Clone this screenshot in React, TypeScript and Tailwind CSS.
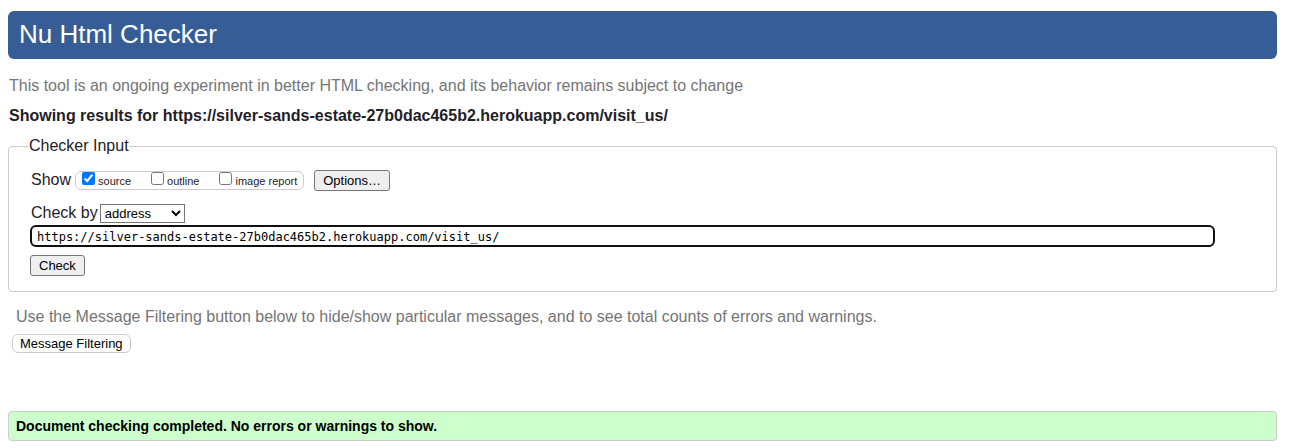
import { useState } from "react";

const buttonClass =
  "h-[21px] rounded-[3px] border border-[#767676] bg-[#efefef] text-[13px] leading-4 text-black";

const address = "https://silver-sands-estate-27b0dac465b2.herokuapp.com/visit_us/";

export default function App() {
  const [value, setValue] = useState(address);
  return (
    <div className="bg-white pt-[11px] pr-[13px] pb-2 pl-2 font-['Liberation_Sans',Arial,sans-serif] text-base leading-5 text-[#1f2126]">
      <header className="flex h-12 items-center rounded-md bg-[#365d95] px-[11px] pb-[2px]">
        <h1 className="text-[26px] leading-8 text-white">Nu Html Checker</h1>
      </header>
      <main>
        <p className="mt-[17px] px-px text-[#757575]">
          This tool is an ongoing experiment in better HTML checking, and its behavior remains
          subject to change
        </p>
        <h2 className="mt-[10px] px-px font-bold">Showing results for {address}</h2>

        <form onSubmit={(e) => e.preventDefault()}>
          <fieldset className="mt-[10px] rounded border border-[#cccccc] pr-[61px] pb-[15px] pl-[19px]">
            <legend className="pl-px">Checker Input</legend>
            <div className="flex flex-col items-start pt-[14px] pl-[2px]">
              <div className="flex h-[21px] items-center pl-px">
                <span className="mr-1 pb-[2px]">Show</span>
                <div className="flex h-[19px] items-center gap-5 rounded-md border border-[#cccccc] px-[6px] text-[11px] leading-4">
                  <label className="flex items-center gap-[3px]">
                    <input type="checkbox" defaultChecked className="mb-1 size-[13px]" />
                    source
                  </label>
                  <label className="flex items-center gap-[3px]">
                    <input type="checkbox" className="mb-1 size-[13px]" />
                    outline
                  </label>
                  <label className="flex items-center gap-[3px]">
                    <input type="checkbox" className="mb-1 size-[13px]" />
                    image report
                  </label>
                </div>
                <button type="button" className={`${buttonClass} ml-[10px] px-2`}>
                  Options…
                </button>
              </div>
              <div className="mt-3 flex h-5 items-center pl-px">
                <label htmlFor="check-by" className="mr-[2px]">
                  Check by
                </label>
                <select
                  id="check-by"
                  className="h-[19px] w-[85px] border border-[#767676] bg-white text-[13px] leading-4 text-black"
                >
                  <option>address</option>
                  <option>file upload</option>
                  <option>text input</option>
                </select>
              </div>
              <input
                type="url"
                aria-label="Address of page to check"
                value={value}
                onChange={(e) => setValue(e.target.value)}
                className="mt-[2px] h-[22px] w-full rounded-md border-2 border-[#101010] bg-white px-[5px] pt-px font-['DejaVu_Sans_Mono',monospace] text-[12px] text-black outline-none"
              />
              <button type="submit" className={`${buttonClass} mt-2 px-2`}>
                Check
              </button>
            </div>
          </fieldset>
        </form>

        <p className="mt-[15px] px-2 text-[#757575]">
          Use the Message Filtering button below to hide/show particular messages, and to see total
          counts of errors and warnings.
        </p>
        <button
          type="button"
          className="mt-[7px] ml-1 block h-[19px] rounded-md border border-[#cccccc] bg-white px-[7px] text-[13px] leading-4 text-black"
        >
          Message Filtering
        </button>
        <p
          role="status"
          className="mt-[58px] rounded border border-[#cccccc] bg-[#ccffcc] px-[7px] py-1 text-sm leading-5 font-bold text-black"
        >
          Document checking completed. No errors or warnings to show.
        </p>
      </main>
    </div>
  );
}
